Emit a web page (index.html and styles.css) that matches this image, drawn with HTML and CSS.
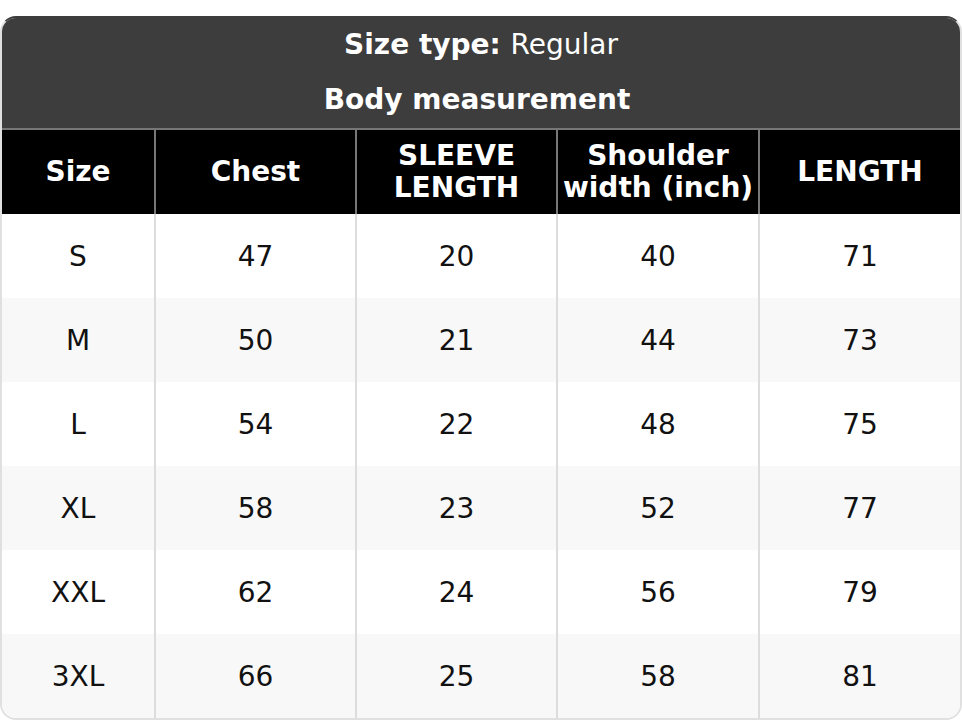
FILE: index.html
```html
<!DOCTYPE html>
<html>
<head>
<meta charset="utf-8">
<link rel="stylesheet" href="styles.css">
</head>
<body>
<div class="wrap">
  <table class="chart">
    <colgroup>
      <col class="c1"><col class="c2"><col class="c3"><col class="c4"><col class="c5">
    </colgroup>
    <thead>
      <tr class="title t1"><th colspan="5"><b>Size type:</b> <span class="reg">Regular</span></th></tr>
      <tr class="title t2"><th colspan="5">Body measurement</th></tr>
      <tr class="head">
        <th>Size</th><th>Chest</th><th>SLEEVE<br>LENGTH</th><th>Shoulder<br>width (inch)</th><th>LENGTH</th>
      </tr>
    </thead>
    <tbody>
      <tr><td>S</td><td>47</td><td>20</td><td>40</td><td>71</td></tr>
      <tr><td>M</td><td>50</td><td>21</td><td>44</td><td>73</td></tr>
      <tr><td>L</td><td>54</td><td>22</td><td>48</td><td>75</td></tr>
      <tr><td>XL</td><td>58</td><td>23</td><td>52</td><td>77</td></tr>
      <tr><td>XXL</td><td>62</td><td>24</td><td>56</td><td>79</td></tr>
      <tr><td>3XL</td><td>66</td><td>25</td><td>58</td><td>81</td></tr>
    </tbody>
  </table>
</div>
</body>
</html>
```
FILE: styles.css
```css
html, body {
  margin: 0;
  padding: 0;
  background: #ffffff;
}
body {
  font-family: "DejaVu Sans", sans-serif;
  font-size: 28px;
  color: #111111;
}
.wrap {
  margin-top: 16px;
  border: 2px solid #e0e0e0;
  border-top-color: #3d3d3d;
  border-radius: 16px;
  overflow: hidden;
  width: 958px;
}
.chart {
  width: 100%;
  border-collapse: separate;
  border-spacing: 0;
  table-layout: fixed;
}
.c1 { width: 152px; }
.c2 { width: 201px; }
.c3 { width: 201px; }
.c4 { width: 202px; }
.c5 { width: 202px; }
.title th {
  background: #3d3d3d;
  color: #ffffff;
  font-weight: bold;
  padding: 0;
  text-align: center;
}
.t1 th { height: 53px; }
.t2 th { height: 57px; padding-right: 8px; }
.reg { font-weight: normal; }
.head th {
  background: #000000;
  color: #ffffff;
  font-weight: bold;
  height: 86px;
  padding: 0 2px;
  border-top: 2px solid #777777;
  box-sizing: border-box;
  text-align: center;
  vertical-align: middle;
  line-height: 32px;
}
.head th + th { border-left: 2px solid #777777; }
tbody td {
  height: 84px;
  padding: 0;
  text-align: center;
  vertical-align: middle;
  background: #ffffff;
}
tbody td + td { border-left: 2px solid #dddddd; }
tbody tr:nth-child(even) td { background: #f8f8f8; }
```
